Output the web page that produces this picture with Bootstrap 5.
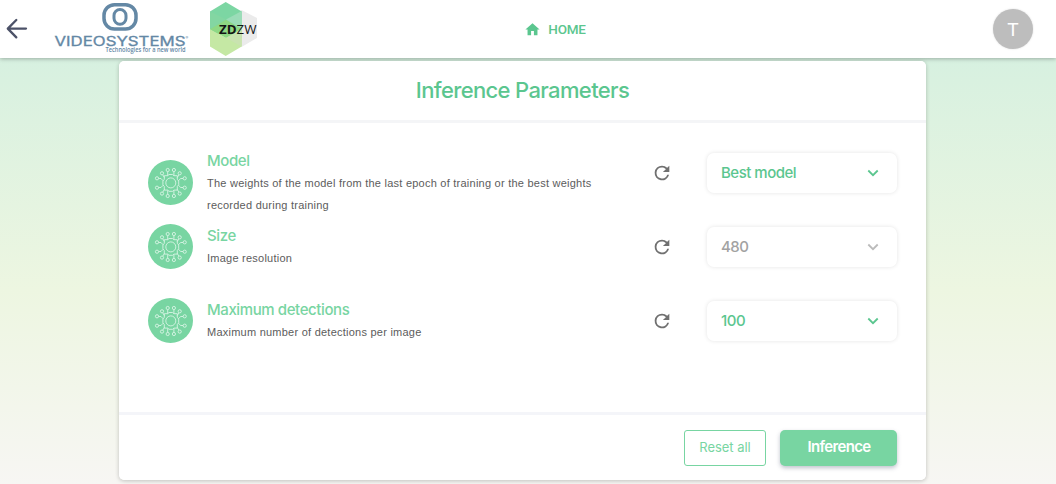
<!DOCTYPE html>
<html lang="en">
<head>
<meta charset="utf-8">
<meta name="viewport" content="width=device-width, initial-scale=1">
<title>Inference Parameters</title>
<link rel="stylesheet" href="https://cdn.jsdelivr.net/npm/bootstrap@5.3.0/dist/css/bootstrap.min.css">
<style>
body{height:484px;overflow:hidden;font-family:Inter,"Open Sans",sans-serif;background:linear-gradient(#d1f0e1 0,#d9f1e0 80px,#edf6e1 290px,#f7f6f3 484px)}
.topbar{height:58px;box-shadow:0 1px 4px rgba(0,0,0,.28);position:relative}
.topbar .side{width:300px}
.home{font:500 13.5px Roboto,sans-serif;color:#5bc68f;text-decoration:none;letter-spacing:-.25px;margin-left:54px}
.topbar .side-end{width:246px}
.avatar{width:40px;height:40px;background:#bdbdbd;font:400 19px Roboto,sans-serif;box-shadow:0 0 2px rgba(0,0,0,.15)}
.panel{width:807px;height:419px;margin:3px 0 0 119px;border:0;border-radius:5px;box-shadow:0 1px 4px rgba(0,0,0,.22)}
.panel .card-header{height:62px;border-bottom:3px solid #f4f5f7}
.panel .card-footer{height:68px;border-top:3px solid #f4f5f9}
.panel h1{font-size:22px;font-weight:500;letter-spacing:-.64px;color:#5bc68f;line-height:30px;padding-bottom:2px}
.panel .card-body{padding:13px 29px 0}
.param{height:74px}
.param.tall .about{margin-top:20px}
.about{width:500px}
.about svg{margin:-1px 14px 0 0}
.about h2{font-size:15px;font-weight:500;line-height:22px;letter-spacing:-.4px;color:#78d5a2}
.about p{font:11px/22px "Liberation Sans",sans-serif;letter-spacing:.24px;color:#5c5c5c;width:410px}
.pick{width:190px;height:40px;border-radius:7px;box-shadow:0 0 4px rgba(0,0,0,.11);background:#fff;border:0;color:#5bc68f;font-size:15px;font-weight:500;letter-spacing:-.5px;padding:0 17px 0 14px}
.pick:disabled{color:#a2a2a2}
.pick:disabled svg{color:#bbb}
.again{width:24px;margin-right:33px;color:#707070}
.btn-reset{width:82px;height:36px;border:1px solid #78d5a2;border-radius:3px;color:#78d5a2;font-size:13px;font-weight:400;padding:0;letter-spacing:-.05px}
.btn-go{width:117px;height:36px;border-radius:5px;background:#78d5a2;color:#fff;font-size:15px;font-weight:600;letter-spacing:-.65px;padding:0 0 0 1px;box-shadow:0 2px 4px rgba(70,80,110,.35)}
</style>
</head>
<body>
<svg class="d-none">
 <symbol id="chip" viewBox="0 0 45 45">
  <circle cx="22.5" cy="22.5" r="22.5" fill="#78d5a2"/>
  <g fill="none" stroke="#def6e8" stroke-width=".85">
   <circle cx="22.800" cy="22.900" r="5"/>
   <path d="M16.300 15.700h3.400l1.300-1.200h3.600l1.300 1.200h3.400v3.600l1.400 1.700v3.800l-1.400 1.700v3.600h-3.400l-1.300 1.200H21l-1.300-1.200h-3.400v-3.600l-1.400-1.700V21l1.400-1.700z"/>
   <path d="M19.700 11.700v4M25.900 11.700v4M14.800 14.900l1.500 2.600M30.800 14.900l-1.500 2.600M10.600 18.500h2.400l2 2.200M35 18.500h-2.400l-2 2.200M10.600 27.500h2.400l2-2.200M35 27.500h-2.400l-2-2.200M14.800 32.100l1.500-2.600M30.800 32.100l-1.500-2.600M19.700 34.300v-4M25.900 34.300v-4"/>
   <circle cx="19.700" cy="10" r="1.600"/><circle cx="25.900" cy="10" r="1.600"/><circle cx="14" cy="13.300" r="1.600"/><circle cx="31.700" cy="13.300" r="1.600"/><circle cx="9" cy="18.300" r="1.600"/><circle cx="36.700" cy="18.300" r="1.600"/><circle cx="9" cy="27.700" r="1.600"/><circle cx="36.700" cy="27.700" r="1.600"/><circle cx="14" cy="33.600" r="1.600"/><circle cx="31.700" cy="33.600" r="1.600"/><circle cx="19.700" cy="36" r="1.600"/><circle cx="25.900" cy="36" r="1.600"/>
  </g>
 </symbol>
 <symbol id="refresh" viewBox="0 0 24 24"><path fill="currentColor" d="M17.650 6.350A7.958 7.958 0 0 0 12 4a8 8 0 1 0 7.730 10h-2.080A6 6 0 1 1 12 6c1.660 0 3.140.690 4.220 1.780L13 11h7V4z"/></symbol>
 <symbol id="down" viewBox="0 0 14 14"><path d="M2.300 4.500 7 9.200l4.700-4.700" fill="none" stroke="currentColor" stroke-width="1.800"/></symbol>
</svg>

<nav class="topbar bg-white d-flex align-items-center">
 <div class="side d-flex align-items-center">
  <svg width="24" height="24" class="ms-1" viewBox="0 0 24 24" fill="none" stroke="#4c5268" stroke-width="2.300" stroke-linecap="round" stroke-linejoin="round"><path d="M22 11.600H4M12.300 3 3.800 11.600l8.500 8.800"/></svg>
  <svg width="140" height="58" style="margin-left:24px" viewBox="52 0 140 58">
   <rect x="104" y="4.700" width="32" height="24.300" rx="10.500" fill="none" stroke="#6488a5" stroke-width="3.500"/>
   <rect x="114" y="9.500" width="12" height="14.800" rx="6" fill="none" stroke="#6488a5" stroke-width="3"/>
   <text x="54.500" y="46" font-family="Inter" font-size="12.500" fill="#6488a5" stroke="#6488a5" stroke-width=".3" textLength="131" lengthAdjust="spacingAndGlyphs">VIDEOSYSTEMS</text>
   <text x="185.500" y="39" font-family="Inter" font-size="4" fill="#6488a5">®</text>
   <text x="105.500" y="52.300" font-family="Open Sans" font-weight="600" font-size="6.300" fill="#6488a5" textLength="80" lengthAdjust="spacingAndGlyphs">Technologies for a new world</text>
  </svg>
  <svg width="52" height="58" style="margin-left:16px" viewBox="208 0 52 58">
   <path d="M226 18 241.500 10 257 18v20l-15.500 9L226 38z" fill="#ebebeb"/>
   <path d="M210 11.500 225.700 2l16 9.500V38L226 29.500 210 38z" fill="#7cd6a3"/>
   <path d="M210 29 226 38l15.700-9.500V46.500L225.700 56 210 46.500z" fill="#c5e8a4"/>
   <path d="M210 29 226 19.500 241.700 29 226 38z" fill="#8fd884"/>
   <path d="M226 19.500 241.700 11v18z" fill="#9bdcb8"/>
   <path d="M210 11.500 226 19.500 210 29z" fill="#83d6a2"/>
   <path d="M226 38 241.700 29v17.500z" fill="#c9e3b0"/>
   <text x="219" y="33.500" font-family="Open Sans" font-size="12.500" fill="#151515" textLength="37.500" lengthAdjust="spacingAndGlyphs"><tspan font-weight="700">ZD</tspan>ZW</text>
  </svg>
 </div>
 <a class="home d-flex align-items-center mx-auto" href="#" style="position:relative"><svg width="17" height="17" viewBox="0 0 24 24" style="margin-right:7px"><path fill="currentColor" d="M10 20v-6h4v6h5v-8h3L12 3 2 12h3v8z"/></svg>HOME</a>
 <div class="side side-end d-flex justify-content-end"><div class="avatar rounded-circle text-white d-flex align-items-center justify-content-center" style="margin-right:23px">T</div></div>
</nav>

<main class="panel card">
 <div class="card-header bg-white d-flex justify-content-center align-items-center p-0 rounded-top"><h1 class="m-0">Inference Parameters</h1></div>
 <div class="card-body">
  <div class="param tall d-flex align-items-center">
   <div class="about d-flex align-items-center"><svg width="45" height="45" class="flex-shrink-0"><use href="#chip"/></svg><div><h2 class="m-0">Model</h2><p class="m-0">The weights of the model from the last epoch of training or the best weights recorded during training</p></div></div>
   <svg class="again ms-auto" width="22" height="22"><use href="#refresh"/></svg>
   <button class="pick d-flex align-items-center justify-content-between">Best model<svg width="14" height="14"><use href="#down"/></svg></button>
  </div>
  <div class="param d-flex align-items-center">
   <div class="about d-flex align-items-center"><svg width="45" height="45" class="flex-shrink-0"><use href="#chip"/></svg><div><h2 class="m-0">Size</h2><p class="m-0">Image resolution</p></div></div>
   <svg class="again ms-auto" width="22" height="22"><use href="#refresh"/></svg>
   <button class="pick d-flex align-items-center justify-content-between" disabled>480<svg width="14" height="14"><use href="#down"/></svg></button>
  </div>
  <div class="param d-flex align-items-center">
   <div class="about d-flex align-items-center"><svg width="45" height="45" class="flex-shrink-0"><use href="#chip"/></svg><div><h2 class="m-0">Maximum detections</h2><p class="m-0">Maximum number of detections per image</p></div></div>
   <svg class="again ms-auto" width="22" height="22"><use href="#refresh"/></svg>
   <button class="pick d-flex align-items-center justify-content-between">100<svg width="14" height="14"><use href="#down"/></svg></button>
  </div>
 </div>
 <div class="card-footer bg-white d-flex justify-content-end align-items-center p-0 rounded-bottom"><button class="btn btn-reset">Reset all</button><button class="btn btn-go" style="margin:0 29px 0 14px">Inference</button></div>
</main>
<script src="https://cdn.jsdelivr.net/npm/bootstrap@5.3.0/dist/js/bootstrap.bundle.min.js"></script>
</body>
</html>
